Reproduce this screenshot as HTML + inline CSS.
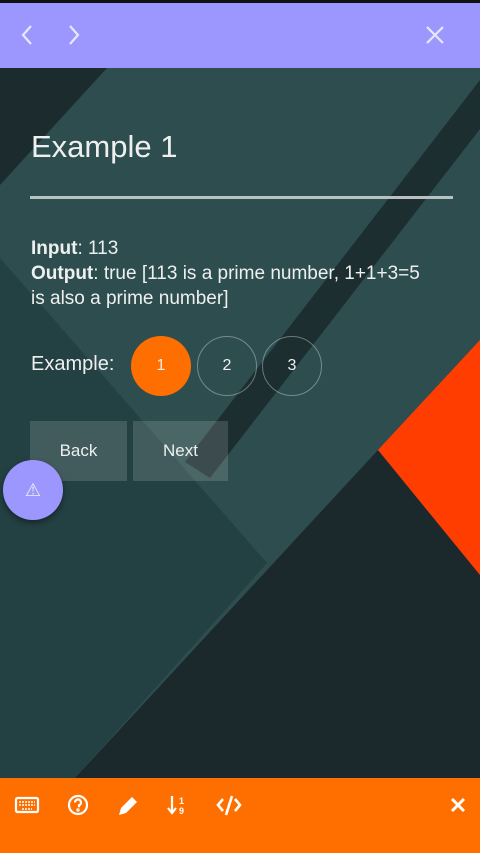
<!DOCTYPE html>
<html><head><meta charset="utf-8"><style>
*{margin:0;padding:0;box-sizing:border-box}
body{width:480px;height:853px;overflow:hidden;position:relative;background:#2e4d4f;font-family:"Liberation Sans",sans-serif;color:#eef0f0}
.top{position:absolute;left:0;top:0;width:480px;height:68px;background:#9b97ff;border-top:3px solid #111}
.bot{position:absolute;left:0;top:778px;width:480px;height:75px;background:#ff6f00}
.abs{position:absolute}
.circ{position:absolute;top:336px;width:60px;height:60px;border-radius:50%;border:1px solid rgba(255,255,255,.35);text-align:center;line-height:58px;font-size:16px}
.btn{position:absolute;top:421px;height:60px;background:rgba(255,255,255,.14);text-align:center;line-height:60px;font-size:17px}
</style></head><body>
<svg class="abs" style="left:0;top:0" width="480" height="853">
<polygon points="0,68 107,68 0,185" fill="#1c2b2e"/>
<polygon points="0,258 267,563 75,778 0,778" fill="#234043"/>
<polygon points="480,80 480,129 210,478 185,462" fill="#1d2e31"/>
<polygon points="75,778 378,450 480,575 480,778" fill="#1b282c"/>
<polygon points="378,450 480,340 480,575" fill="#ff3d00"/>
</svg>
<div class="top">
<svg class="abs" style="left:18px;top:20px" width="70" height="26" fill="none" stroke="#e8e8ff" stroke-width="2.2"><path d="M13 3 L5 12 L13 21"/><path d="M52 3 L60 12 L52 21"/></svg>
<svg class="abs" style="left:424px;top:21px" width="22" height="22" stroke="#e8e8ff" stroke-width="2.2"><path d="M3 3L19 19M19 3L3 19"/></svg>
</div>
<div class="abs" style="left:31px;top:129px;font-size:31px">Example 1</div>
<div class="abs" style="left:30px;top:196px;width:423px;height:3px;background:#b8c0c0"></div>
<div class="abs" style="left:31px;top:236px;font-size:19px;line-height:25px;width:405px"><b>Input</b>: 113<br><b>Output</b>: true [113 is a prime number, 1+1+3=5 is also a prime number]</div>
<div class="abs" style="left:31px;top:353px;font-size:20px">Example:</div>
<div class="circ" style="left:131px;background:#ff6f00;border:none;line-height:60px">1</div>
<div class="circ" style="left:197px">2</div>
<div class="circ" style="left:262px">3</div>
<div class="btn" style="left:30px;width:97px">Back</div>
<div class="btn" style="left:133px;width:95px">Next</div>
<div class="abs" style="left:3px;top:460px;width:60px;height:60px;border-radius:50%;background:#9b97ff;box-shadow:0 3px 6px rgba(0,0,0,.4);text-align:center;line-height:60px;font-size:18px">⚠</div>
<div class="bot">
<svg class="abs" style="left:0;top:0" width="480" height="60" fill="none" stroke="#fff" stroke-width="2.2">
<rect x="16" y="20" width="22" height="14" rx="1.5"/>
<path d="M19 24h16M19 27h16M22 31h10" stroke-width="1.5" stroke-dasharray="2 1"/>
<circle cx="78" cy="27" r="9"/>
<path d="M75 24.5a3 3 0 1 1 4 2.8v2" /><circle cx="78" cy="32" r=".6"/>
<path d="M119 37l2-7 11-11 5 5-11 11z" fill="#fff" stroke="none"/>
<path d="M172 18v16M168 30l4 5 4-5"/>
<text x="179" y="26" font-size="9" fill="#fff" stroke="none" font-weight="bold" font-family="Liberation Sans">1</text>
<text x="179" y="36" font-size="9" fill="#fff" stroke="none" font-weight="bold" font-family="Liberation Sans">9</text>
<path d="M223 21l-5 6 5 6M235 21l5 6-5 6M232 18l-6 19" stroke-width="2.6"/>
<path d="M452 21l12 12M464 21l-12 12" stroke-width="3"/>
</svg>
</div>
</body></html>
